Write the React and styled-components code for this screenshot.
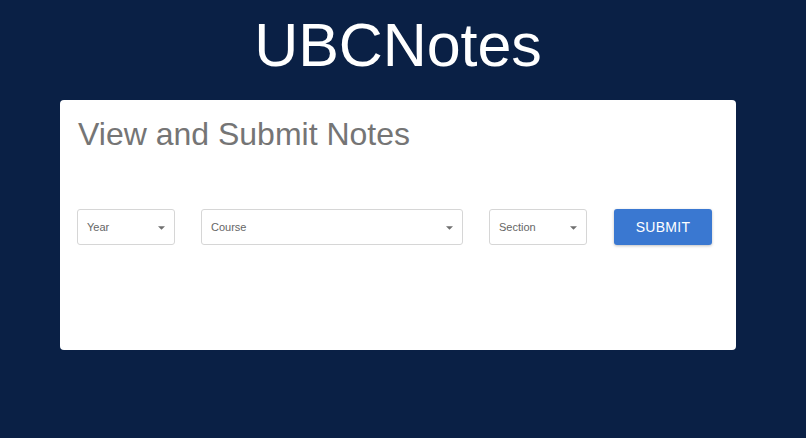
import styled, { createGlobalStyle } from "styled-components"

const Global = createGlobalStyle`
    html, body {
        margin: 0;
        padding: 0;
        background-color: #0a2045;
        font-family: "Liberation Sans", Arial, sans-serif;
    }
`

const Select = ({ label, width }) => {
    return (
        <SSelect width={width}>
            <SSelectLabel>{label}</SSelectLabel>
            <SCaret viewBox="0 0 10 5">
                <path d="M0 0 L10 0 L5 5 Z" fill="#6f6f6f" />
            </SCaret>
        </SSelect>
    )
}

export default function App() {
    return (
        <>
            <Global />
            <SPage>
                <STitle>UBCNotes</STitle>
                <SCard>
                    <SHeading>View and Submit Notes</SHeading>
                    <SForm>
                        <Select label="Year" width={98} />
                        <Select label="Course" width={262} />
                        <Select label="Section" width={98} />
                        <SButton>SUBMIT</SButton>
                    </SForm>
                </SCard>
            </SPage>
        </>
    )
}

const SPage = styled.div`
    width: 806px;
    height: 438px;
    box-sizing: border-box;
    padding-right: 10px;
    display: flex;
    flex-direction: column;
    align-items: center;
    background-color: #0a2045;
`

const STitle = styled.h1`
    margin: 9px 0 0 0;
    color: #fff;
    font-size: 61px;
    font-weight: 400;
    line-height: 72px;
    letter-spacing: -0.1px;
`

const SCard = styled.div`
    margin-top: 19px;
    width: 676px;
    height: 250px;
    box-sizing: border-box;
    background-color: #fff;
    border-radius: 4px;
    padding: 14px 17px;
`

const SHeading = styled.h2`
    margin: 0 0 0 1px;
    color: #757575;
    font-size: 32px;
    font-weight: 400;
    line-height: 40px;
`

const SForm = styled.div`
    display: flex;
    align-items: center;
    gap: 26px;
    margin-top: 55px;
`

const SSelect = styled.div`
    width: ${(p) => p.width}px;
    height: 36px;
    box-sizing: border-box;
    border: 1px solid #d6d6d6;
    border-radius: 3px;
    display: flex;
    align-items: center;
    justify-content: space-between;
    padding: 0 9px 0 9px;
`

const SSelectLabel = styled.span`
    color: #666;
    font-size: 11px;
`

const SCaret = styled.svg`
    width: 7px;
    height: 4px;
    margin-top: 2px;
`

const SButton = styled.button`
    width: 98px;
    height: 36px;
    margin-left: 1px;
    border: none;
    border-radius: 3px;
    background-color: #3a78d1;
    color: #fff;
    font-family: "Liberation Sans", Arial, sans-serif;
    font-size: 14px;
    letter-spacing: 0.3px;
    box-shadow: 0 1px 3px rgba(0, 0, 0, 0.25);
    cursor: pointer;
`
